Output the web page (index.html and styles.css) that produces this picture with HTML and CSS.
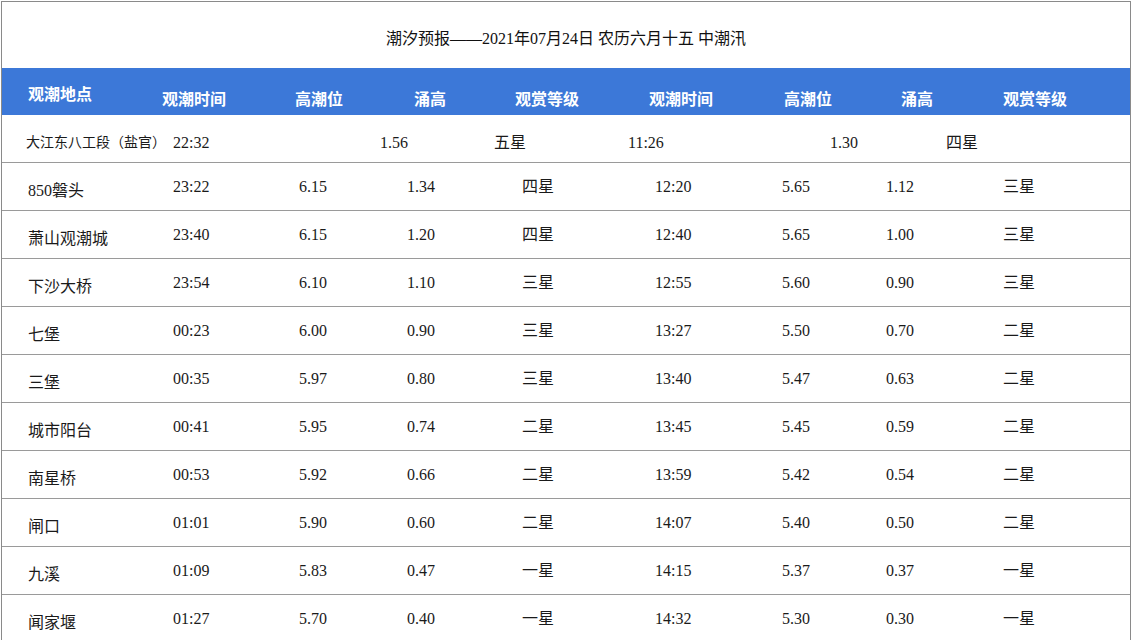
FILE: index.html
```html
<!DOCTYPE html>
<html lang="zh-CN">
<head>
<meta charset="utf-8">
<title>潮汐预报</title>
<link rel="stylesheet" href="styles.css">
</head>
<body>
<div class="sheet">
  <div class="title">潮汐预报——2021年07月24日 农历六月十五 中潮汛</div>
  <div class="head">
    <div class="h first">观潮地点</div>
    <div class="h">观潮时间</div>
    <div class="h">高潮位</div>
    <div class="h">涌高</div>
    <div class="h">观赏等级</div>
    <div class="h">观潮时间</div>
    <div class="h">高潮位</div>
    <div class="h">涌高</div>
    <div class="h">观赏等级</div>
  </div>
  <div class="row special">
    <div class="name small">大江东八工段（盐官）</div>
    <div>22:32</div>
    <div>1.56</div>
    <div>五星</div>
    <div>11:26</div>
    <div>1.30</div>
    <div>四星</div>
  </div>
  <div class="row"><div class="name">850磐头</div><div>23:22</div><div>6.15</div><div>1.34</div><div>四星</div><div>12:20</div><div>5.65</div><div>1.12</div><div>三星</div></div>
  <div class="row"><div class="name">萧山观潮城</div><div>23:40</div><div>6.15</div><div>1.20</div><div>四星</div><div>12:40</div><div>5.65</div><div>1.00</div><div>三星</div></div>
  <div class="row"><div class="name">下沙大桥</div><div>23:54</div><div>6.10</div><div>1.10</div><div>三星</div><div>12:55</div><div>5.60</div><div>0.90</div><div>三星</div></div>
  <div class="row"><div class="name">七堡</div><div>00:23</div><div>6.00</div><div>0.90</div><div>三星</div><div>13:27</div><div>5.50</div><div>0.70</div><div>二星</div></div>
  <div class="row"><div class="name">三堡</div><div>00:35</div><div>5.97</div><div>0.80</div><div>三星</div><div>13:40</div><div>5.47</div><div>0.63</div><div>二星</div></div>
  <div class="row"><div class="name">城市阳台</div><div>00:41</div><div>5.95</div><div>0.74</div><div>二星</div><div>13:45</div><div>5.45</div><div>0.59</div><div>二星</div></div>
  <div class="row"><div class="name">南星桥</div><div>00:53</div><div>5.92</div><div>0.66</div><div>二星</div><div>13:59</div><div>5.42</div><div>0.54</div><div>二星</div></div>
  <div class="row"><div class="name">闸口</div><div>01:01</div><div>5.90</div><div>0.60</div><div>二星</div><div>14:07</div><div>5.40</div><div>0.50</div><div>二星</div></div>
  <div class="row"><div class="name">九溪</div><div>01:09</div><div>5.83</div><div>0.47</div><div>一星</div><div>14:15</div><div>5.37</div><div>0.37</div><div>一星</div></div>
  <div class="row"><div class="name">闻家堰</div><div>01:27</div><div>5.70</div><div>0.40</div><div>一星</div><div>14:32</div><div>5.30</div><div>0.30</div><div>一星</div></div>
</div>
</body>
</html>
```

FILE: styles.css
```css
html, body {
  margin: 0;
  padding: 0;
  background: #ffffff;
}

body {
  font-family: "Liberation Serif", "Noto Sans CJK SC", serif;
  font-size: 16px;
  color: #1a1a1a;
  overflow: hidden;
}

.sheet {
  margin: 1px 0 0 1px;
  width: 1128px;
  border: 1px solid #8a8a8a;
  border-bottom: none;
}

.title {
  height: 66px;
  box-sizing: border-box;
  padding-top: 27px;
  line-height: 20px;
  text-align: center;
  font-size: 16px;
  color: #111111;
}

.head {
  height: 47px;
  background: #3c78d8;
  display: grid;
  grid-template-columns: 134px 133px 119px 101px 134px 135px 117px 102px 1fr;
  padding-left: 26px;
  align-items: start;
}

.h {
  color: #ffffff;
  font-weight: bold;
  font-size: 16px;
  line-height: 20px;
  padding-top: 22px;
  white-space: nowrap;
}

.h.first {
  padding-top: 17px;
}

.row {
  height: 47px;
  border-bottom: 1px solid #9a9a9a;
  display: grid;
  grid-template-columns: 145px 126px 108px 115px 133px 127px 104px 117px 1fr;
  padding-left: 26px;
  align-items: center;
  line-height: 20px;
  white-space: nowrap;
}

.row .name {
  padding-top: 8px;
}

.row.special {
  grid-template-columns: 147px 207px 114px 134px 202px 116px 1fr;
  padding-left: 24px;
}

.row.special > div {
  padding-top: 8px;
}

.name.small {
  font-size: 14px;
}
```
